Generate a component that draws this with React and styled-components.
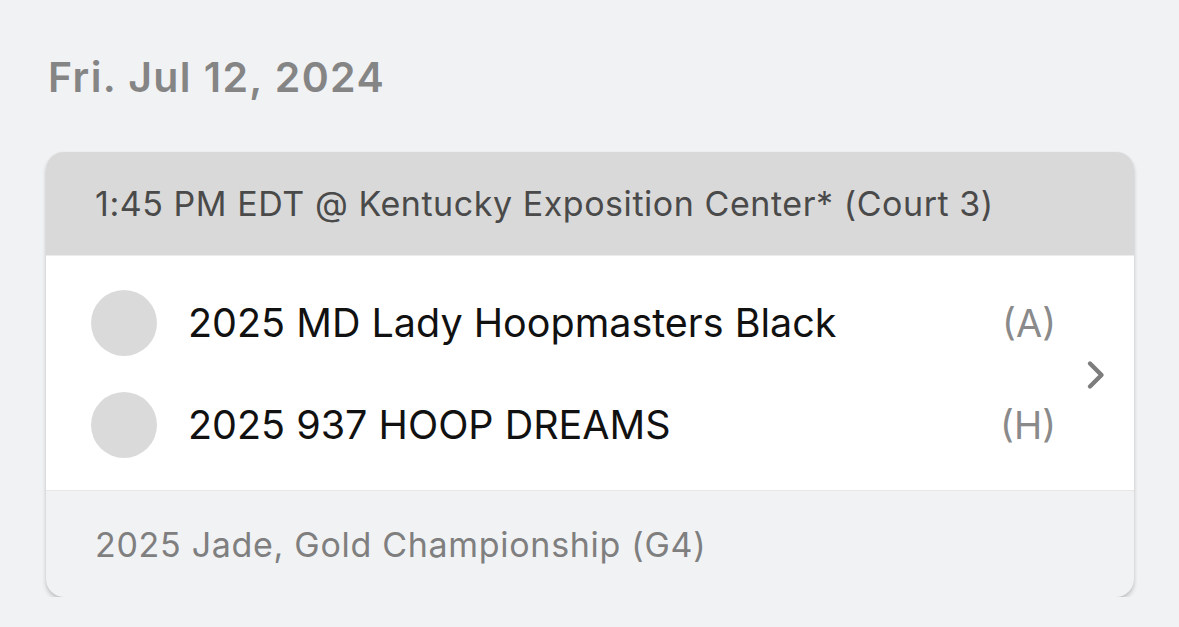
import React from "react";
import styled, { createGlobalStyle } from "styled-components";

const Global = createGlobalStyle`
  body {
    margin: 0;
    background: #f1f2f4;
    font-family: Inter, "Noto Sans", sans-serif;
  }
`;

const Page = styled.div`
  padding: 52px 45px 0 46px;
`;

const DateTitle = styled.h1`
  margin: 0 0 0 2px;
  font-size: 41px;
  font-weight: 600;
  letter-spacing: 1.4px;
  color: #858585;
  line-height: 50px;
`;

const Card = styled.div`
  margin-top: 50px;
  border-radius: 18px;
  overflow: hidden;
  background: #f1f2f4;
  box-shadow: 0 3px 4px rgba(0, 0, 0, 0.2), 0 0 1px rgba(0, 0, 0, 0.1);
`;

const Header = styled.div`
  background: #d9d9d9;
  height: 103px;
  display: flex;
  align-items: center;
  padding-left: 49px;
  font-size: 34px;
  letter-spacing: 0.55px;
  color: #4a4a4a;
`;

const Body = styled.div`
  background: #fff;
  display: flex;
  align-items: center;
  padding: 34px 27px 32px 45px;
  border-top: 1px solid #ececec;
  border-bottom: 1px solid #e6e6e6;
`;

const Teams = styled.div`
  flex: 1;
  display: flex;
  flex-direction: column;
  gap: 36px;
`;

const TeamRow = styled.div`
  display: flex;
  align-items: center;
  height: 66px;
`;

const Logo = styled.div`
  width: 66px;
  height: 66px;
  border-radius: 50%;
  background: #dadada;
  margin-right: 31px;
`;

const TeamName = styled.span`
  flex: 1;
  font-size: 39.5px;
  color: #111;
`;

const Side = styled.span`
  font-size: 38px;
  color: #8a8a8a;
  margin-right: 29px;
`;

const Chevron = styled.svg`
  width: 22px;
  height: 32px;
  margin-top: 2px;
`;

const Footer = styled.div`
  height: 106px;
  display: flex;
  align-items: center;
  padding-left: 49px;
  font-size: 34px;
  letter-spacing: 0.7px;
  color: #7f7f7f;
`;

const teams = [
  { name: "2025 MD Lady Hoopmasters Black", side: "(A)" },
  { name: "2025 937 HOOP DREAMS", side: "(H)" },
];

export default function App() {
  return (
    <>
      <Global />
      <Page>
        <DateTitle>Fri. Jul 12, 2024</DateTitle>
        <Card>
          <Header>1:45 PM EDT @ Kentucky Exposition Center* (Court 3)</Header>
          <Body>
            <Teams>
              {teams.map((t) => (
                <TeamRow key={t.name}>
                  <Logo />
                  <TeamName>{t.name}</TeamName>
                  <Side>{t.side}</Side>
                </TeamRow>
              ))}
            </Teams>
            <Chevron viewBox="0 0 22 32">
              <path
                d="M5 4.5l11.5 11.5-11.5 11.5"
                fill="none"
                stroke="#7d7d7d"
                strokeWidth="4.4"
                strokeLinecap="round"
                strokeLinejoin="round"
              />
            </Chevron>
          </Body>
          <Footer>2025 Jade, Gold Championship (G4)</Footer>
        </Card>
      </Page>
    </>
  );
}
